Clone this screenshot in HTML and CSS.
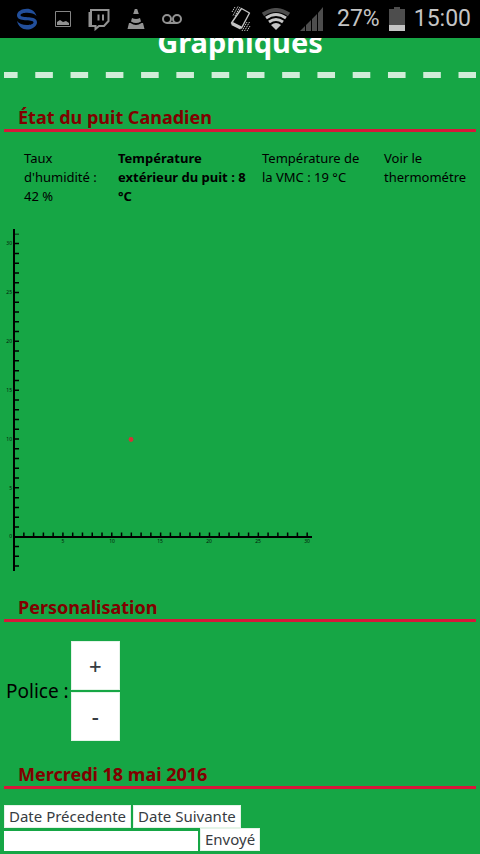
FILE: index.html
```html
<!DOCTYPE html>
<html lang="fr">
<head>
<meta charset="utf-8">
<meta name="viewport" content="width=device-width, initial-scale=1">
<title>Graphiques</title>
<link rel="stylesheet" href="styles.css">
</head>
<body>
<div class="status">
  <div class="status-left">
    <svg width="22" height="22" viewBox="0 0 22 22" fill="#224f9b"><path d="M20.500 8C19 3 15 .7 11 .7 5.500.7 1 3.500 1 7.300 1 11 5 12 9 12.200c4 .3 8.500.3 8.500 2 0 1.800-3 2.800-6.500 2.800-4.500 0-8-1.500-10-4C2 18 6.500 21.500 11 21.500c5.500 0 10-3.500 10-7.300 0-3.500-4-4.600-8-4.900-4-.3-8.500-.3-8.500-2C4.500 5.500 7.500 4.700 11 4.700c4 0 7.500 1 9.500 3.300z"/></svg>
    <svg width="16" height="16" viewBox="0 0 16 16"><path d="M.5.500h15v15H.5z" fill="none" stroke="#858585"/><path d="M2 14v-3l3-2 3 2 3-1 3 2v2z" fill="#929292"/></svg>
    <svg width="22" height="23" viewBox="0 0 22 23" fill="none" stroke="#929292" stroke-width="2"><path d="M3 2h17.500v11l-4.500 5h-5l-3.500 3v-3H3zM1.500 4v14h6" /><path d="M10.500 6.500v6M15 6.500v6"/></svg>
    <svg width="18" height="20" viewBox="0 0 18 20" fill="#929292"><path d="M7.800 0h2.400l1.600 5H6.200zM5 9q4 2 8 0l1 3.500q-5 3-10 0zM2 14h1.500q5.500 4 11 0H16l1.500 6H.5z"/></svg>
    <svg width="20" height="10" viewBox="0 0 20 10" fill="none" stroke="#929292" stroke-width="2"><circle cx="5" cy="5" r="4"/><circle cx="15" cy="5" r="4"/><path d="M5 9h10"/></svg>
  </div>
  <div class="status-right">
    <svg width="22" height="26" viewBox="0 0 22 26" fill="none" stroke="#c4c4c4" stroke-width="1.400" stroke-linejoin="round"><path d="M11.500 2.500l8 4.500-8 15-10-5z"/><path d="M2 17.500l9 4.500" stroke-width="3.500"/><path d="M3 9.500l5-9M5 10l5-9M2 6l3-5M12 25l5-9M14.500 25l5-9M17 25l3-5" stroke-width="1" stroke-dasharray="1.500 .7"/></svg>
    <svg width="30" height="23" viewBox="0 0 30 23" fill="none" stroke="#c4c4c4" stroke-width="3"><path d="M2 6.500q13-9 26 0" stroke="#4d4d4d" stroke-width="4"/><path d="M5 10q10-7 20 0M8 14q7-5 14 0"/><path d="M10 17q5-4 10 0l-5 5z" fill="#c4c4c4" stroke="none"/></svg>
    <svg width="23" height="24" viewBox="0 0 23 24" fill="#4d4d4d"><path d="M0 24l5-5v5zM6 24v-6l5-5v11zM12 24V12l5-5v17zM18 24V6l5-6v24z"/></svg>
    <span class="level">27%</span>
    <svg width="16" height="24" viewBox="0 0 16 24"><path d="M5 0h6v2h5v22H0V2h5z" fill="#4d4d4d"/><path d="M0 18h16v6H0z" fill="#c4c4c4"/></svg>
    <span>15:00</span>
  </div>
</div>
<main>
  <header class="banner"><h1>Graphiques</h1></header>
  <svg class="dashes" width="472" height="6"><path d="M0 3h472" stroke="#d0edd8" stroke-width="6" stroke-dasharray="17.600 17.670" stroke-dashoffset="4"/></svg>

  <h2>État du puit Canadien</h2>
  <ul class="readings">
    <li>Taux d'humidité : 42 %</li>
    <li class="current">Température extérieur du puit : 8 °C</li>
    <li>Température de la VMC : 19 °C</li>
    <li>Voir le thermométre</li>
  </ul>

  <svg class="chart" width="320" height="344" viewBox="0 0 320 344" role="img" aria-label="Graphique">
    <path d="M14 1v342M14 309h298" stroke="#000" stroke-width="2" fill="none"/>
    <path d="M17 5.800v333" stroke="#000" stroke-width="4" stroke-dasharray="1.500 8.270" stroke-dashoffset=".7"/>
    <path d="M23.100 306.500H310" stroke="#000" stroke-width="4" stroke-dasharray="1.500 8.270"/>
    <g class="y-labels"><text x="12" y="17">30</text><text x="12" y="66">25</text><text x="12" y="115">20</text><text x="12" y="164">15</text><text x="12" y="213">10</text><text x="12" y="262">5</text><text x="12" y="310">0</text></g>
    <g class="x-labels"><text x="63" y="315">5</text><text x="112" y="315">10</text><text x="160" y="315">15</text><text x="209" y="315">20</text><text x="258" y="315">25</text><text x="307" y="315">30</text></g>
    <circle cx="131" cy="211.500" r="2.400" fill="#d33436"/>
  </svg>

  <h2>Personalisation</h2>
  <div class="font-size">
    <span>Police :</span>
    <div class="steps"><button type="button">+</button><button type="button">-</button></div>
  </div>

  <h2>Mercredi 18 mai 2016</h2>
  <form class="dates">
    <div class="row"><button type="button">Date Précedente</button><button type="button">Date Suivante</button></div>
    <div class="row"><input type="text" aria-label="Date"><button type="submit">Envoyé</button></div>
  </form>
</main>
</body>
</html>
```
FILE: styles.css
```css
* { box-sizing: border-box; }
body {
  margin: 0;
  background: #16a645;
  color: #000;
  font: 13px/19px "Noto Sans", sans-serif;
}
svg { display: block; flex: none; }
.status {
  display: flex;
  justify-content: space-between;
  align-items: center;
  height: 38px;
  padding: 0 9px 0 16px;
  background: #000;
  color: #c4c4c4;
  font: 23px/38px Roboto, sans-serif;
}
.status-left, .status-right { display: flex; align-items: center; }
.status-left { gap: 17px; }
.status-right { gap: 9px; }
.level { margin-left: 5px; }
main { padding: 0 4px; }
.banner {
  display: flex;
  align-items: flex-end;
  justify-content: center;
  height: 34px;
  overflow: hidden;
  color: #fff;
}
h1 { margin: 0; font-size: 29px; line-height: 60px; }
.dashes { width: 100%; }
h2 {
  margin: 0;
  padding: 0 14px;
  border-bottom: 3px solid #d8173a;
  color: #800000;
  font-size: 18px;
  line-height: 24px;
}
.dashes + h2 { margin-top: 27px; }
.readings {
  display: grid;
  grid-template-columns: 78px 128px 106px auto;
  gap: 16px;
  margin: 17px 0 22px;
  padding: 0 0 0 20px;
  list-style: none;
}
.current { font-weight: 700; }
.chart { margin: 0 0 23px -4px; }
.y-labels, .x-labels { font-size: 5px; fill: #021a08; }
.y-labels { text-anchor: end; }
.x-labels { text-anchor: middle; }
.font-size {
  display: flex;
  align-items: center;
  gap: 2px;
  margin: 19px 0 21px;
  padding-left: 2px;
  font-size: 19px;
}
.steps { display: flex; flex-direction: column; gap: 2px; }
button {
  padding: 0 4px;
  border: 1px solid #e4f4e8;
  background: #fff;
  color: #373c42;
  font: 15px/21px "Noto Sans", sans-serif;
}
.steps button { width: 49px; height: 49px; font-size: 22px; font-weight: 500; }
.dates { margin-top: 16px; }
.row { display: flex; align-items: flex-end; gap: 2px; }
input { width: 194px; height: 20px; border: 0; background: #fff; }
```
